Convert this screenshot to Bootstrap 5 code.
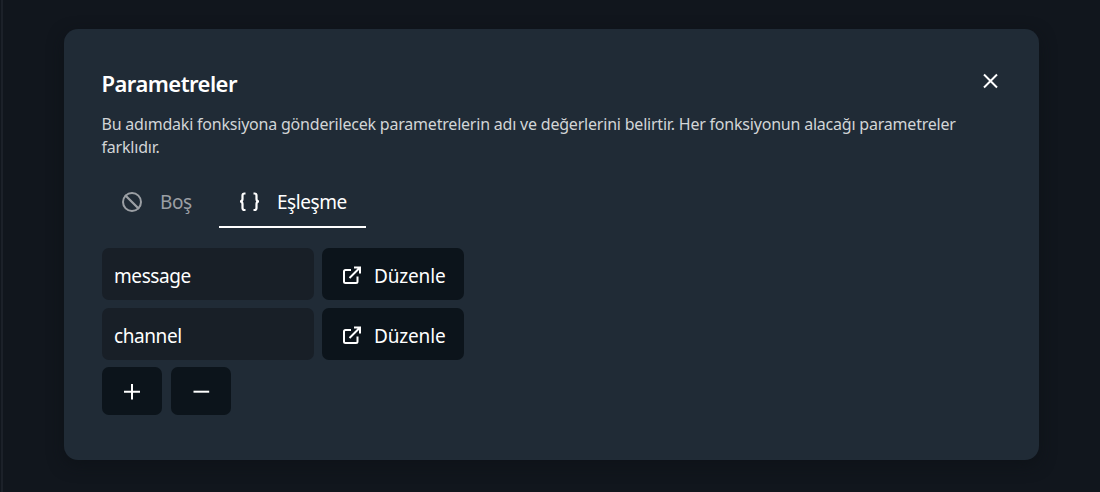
<!DOCTYPE html>
<html lang="tr">
<head>
<meta charset="utf-8">
<meta name="viewport" content="width=device-width, initial-scale=1">
<title>Parametreler</title>
<link href="https://cdn.jsdelivr.net/npm/bootstrap@5.3.0/dist/css/bootstrap.min.css" rel="stylesheet">
<style>
body { background: #11161d; color: #fff; font-family: "Noto Sans", "Open Sans", sans-serif; height: 492px; overflow: hidden; border-left: 1px solid #11161d; }
.stage { height: 492px; border-left: 2px solid #1c2129; padding: 29px 61px 0 61px; }
.panel { height: 431px; background: #202b36; border-radius: 14px; padding: 37px 38px 38px; box-shadow: 0 5px 16px rgba(12,17,21,.65); }
.panel-title { font-size: 22px; line-height: 34px; font-weight: 600; letter-spacing: -.54px; margin-left: -.5px; }
.desc { font-size: 16px; line-height: 23px; color: #d2d5d7; margin: 13px 0 0 -.5px; letter-spacing: -.208px; width: 870px; }
.close-btn { width: 24px; height: 24px; margin: 3px -1px 0 0; color: #fff; }
.tabs { height: 51px; margin-top: 18px; font-size: 19px; }
.tab-item { border: 0; border-bottom: 2px solid transparent; background: none; padding: 1px 19px 0; color: #9b9fa4; letter-spacing: -.45px; }
.tab-item span { margin-left: 17px; }
.tab-item.on { color: #fff; border-color: #fff; }
.rows { margin-top: 20px; gap: 8px; }
.name-field { width: 212px; height: 52px; background: #181f27; border: 0; border-radius: 7px; color: #fff; font-size: 19px; padding: 4px 12px 0; letter-spacing: -.42px; }
.dark-btn { height: 52px; background: #0c141b; color: #fff; border: 0; border-radius: 7px; font-size: 19px; letter-spacing: -.15px; }
.edit-btn { width: 142px; padding: 4px 18.500px 0 20px; }
.square-btn { width: 60px; height: 48px; padding: 0; }
svg { display: block; flex: none; fill: none; stroke: currentColor; stroke-width: 2; overflow: visible; }
</style>
</head>
<body>
<main class="stage">
<section class="panel">
  <header class="d-flex justify-content-between">
    <h1 class="panel-title mb-0">Parametreler</h1>
    <button class="close-btn btn p-0 border-0" aria-label="Kapat"><svg width="24" height="24" viewBox="0 0 24 24"><path d="M6 5.500l13 13M19 5.500l-13 13"/></svg></button>
  </header>
  <p class="desc">Bu adımdaki fonksiyona gönderilecek parametrelerin adı ve değerlerini belirtir. Her fonksiyonun alacağı parametreler farklıdır.</p>
  <nav class="tabs d-flex">
    <button class="tab-item d-flex align-items-center" style="width:117px"><svg width="22" height="22" viewBox="0 0 22 22" stroke-linecap="round"><circle cx="11" cy="11" r="9"/><path d="M4.700 4.700l12.600 12.600" stroke-width="2.300"/></svg><span>Boş</span></button>
    <button class="tab-item on d-flex align-items-center" style="width:147px"><svg width="22" height="22" viewBox="0 0 22 22"><path d="M7.500 2.500H6.500Q4.500 2.500 4.500 4.500V8Q4.500 10.500 2 10.500Q4.500 10.500 4.500 13V17Q4.500 19 6.500 19H7.500M15.500 2.500H16.500Q18.500 2.500 18.500 4.500V8Q18.500 10.500 21 10.500Q18.500 10.500 18.500 13V17Q18.500 19 16.500 19H15.500" stroke-width="2.200"/></svg><span>Eşleşme</span></button>
  </nav>
  <div class="rows d-flex flex-column">
    <div class="d-flex gap-2">
      <input class="name-field" value="message" aria-label="Parametre adı">
      <button class="dark-btn edit-btn d-flex align-items-center justify-content-between"><svg width="20" height="20" viewBox="0 0 20 20"><path d="M9 4H3.500Q2 4 2 5.500V15.500Q2 17 3.500 17H14Q15.500 17 15.500 15.500V10.500M12 1.500H18V7.500M18 1.500L7.500 12"/></svg><span>Düzenle</span></button>
    </div>
    <div class="d-flex gap-2">
      <input class="name-field" value="channel" aria-label="Parametre adı">
      <button class="dark-btn edit-btn d-flex align-items-center justify-content-between"><svg width="20" height="20" viewBox="0 0 20 20"><path d="M9 4H3.500Q2 4 2 5.500V15.500Q2 17 3.500 17H14Q15.500 17 15.500 15.500V10.500M12 1.500H18V7.500M18 1.500L7.500 12"/></svg><span>Düzenle</span></button>
    </div>
  </div>
  <div class="d-flex" style="gap:9px;margin-top:7px">
    <button class="dark-btn square-btn d-flex align-items-center justify-content-center" aria-label="Ekle"><svg width="16" height="16" viewBox="0 0 16 16"><path d="M8 1v15.500M0 8.700h16"/></svg></button>
    <button class="dark-btn square-btn d-flex align-items-center justify-content-center" aria-label="Çıkar"><svg width="16" height="16" viewBox="0 0 16 16"><path d="M.5 8.700h15.700"/></svg></button>
  </div>
</section>
</main>
<script src="https://cdn.jsdelivr.net/npm/bootstrap@5.3.0/dist/js/bootstrap.bundle.min.js"></script>
</body>
</html>
